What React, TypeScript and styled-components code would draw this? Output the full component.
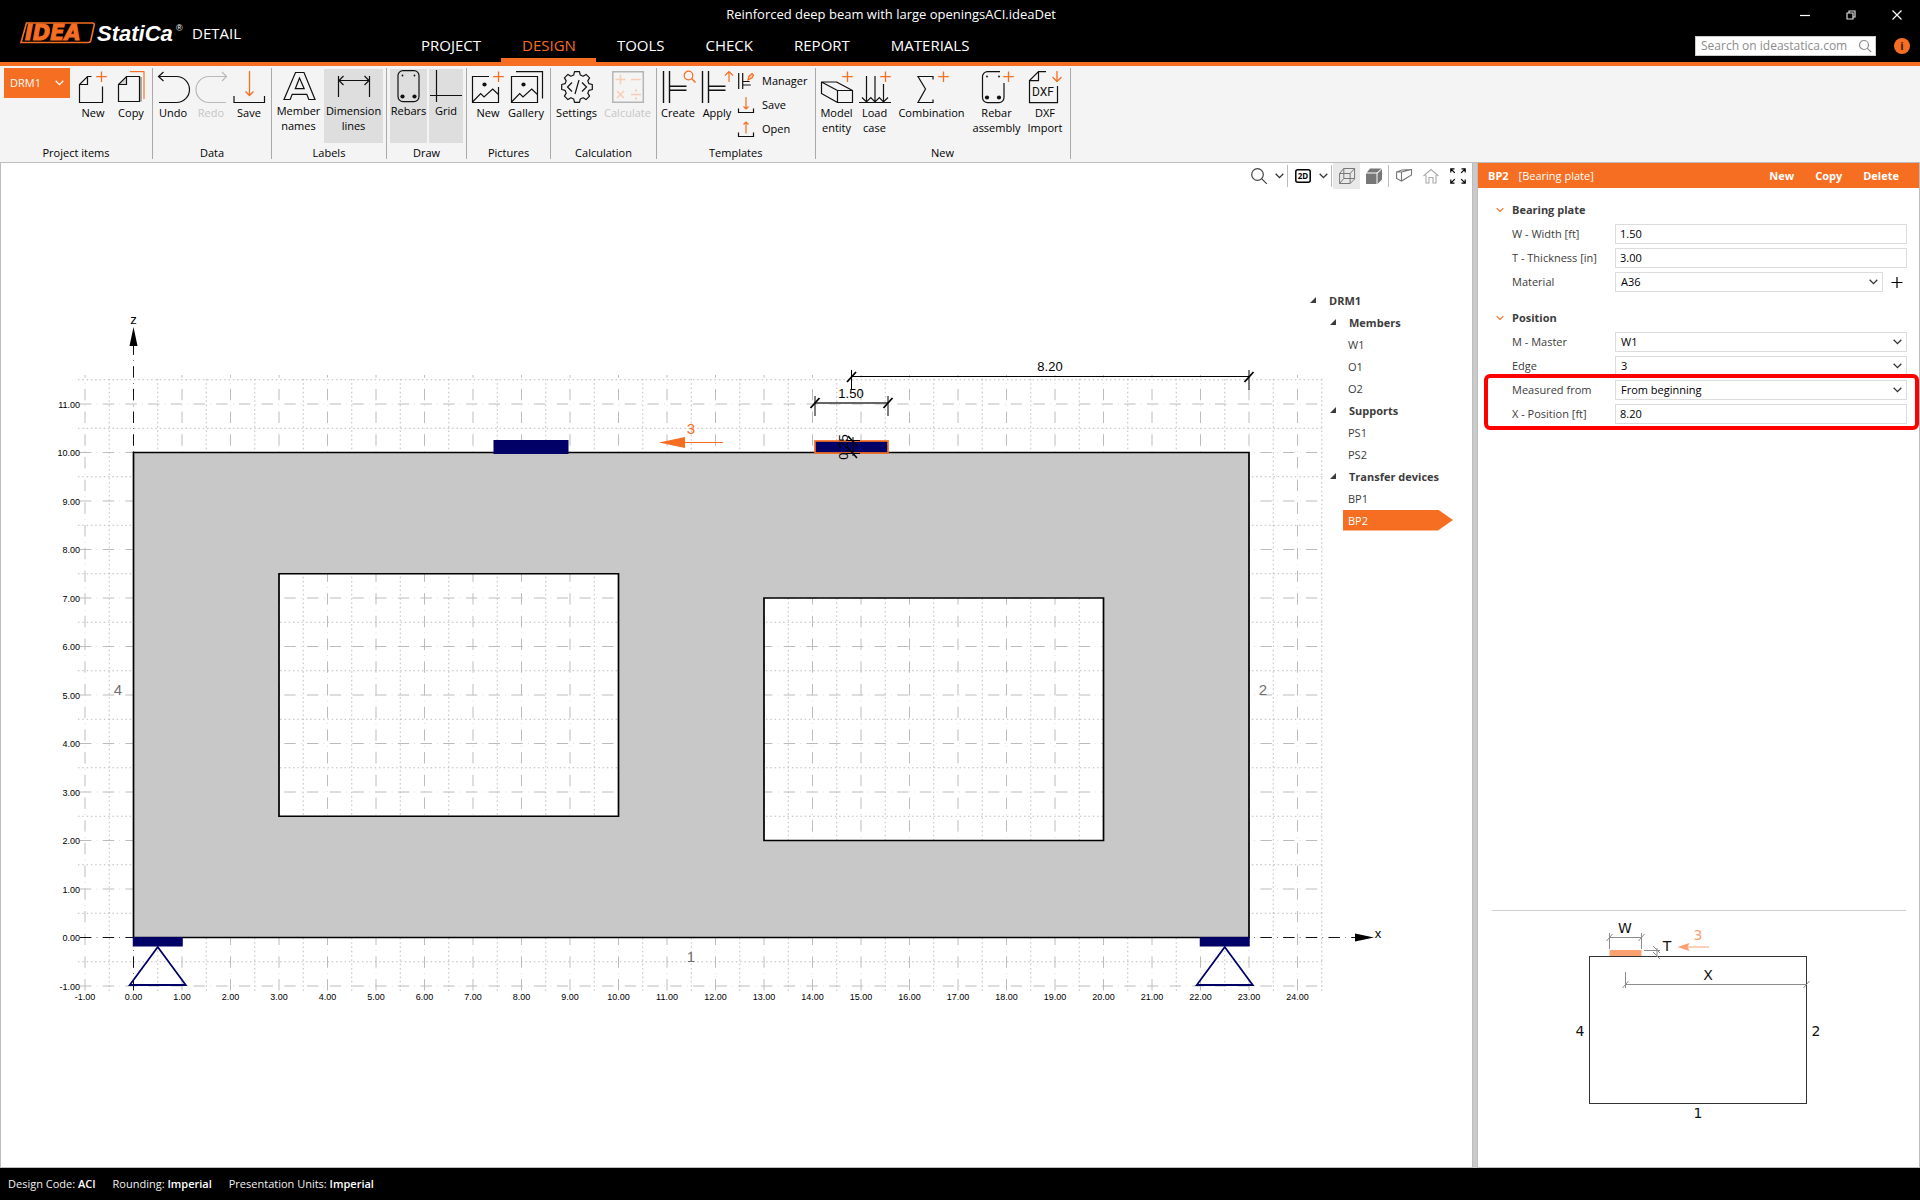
import React from "react";
import styled, { createGlobalStyle, css } from "styled-components";

const ORANGE = "#f56e21";
const NAVY = "#000066";
const LINE = "#bdbdbd";

const GlobalStyle = createGlobalStyle`
  *, *::before, *::after { box-sizing: border-box; }
  body { margin: 0; background: #fff; }
  body, button, input, select {
    font-family: "Open Sans", "Noto Sans", sans-serif;
    font-size: 11px;
    line-height: 16px;
    color: #000;
  }
  button { border: 0; padding: 0; background: none; cursor: pointer; }
  a { color: inherit; text-decoration: none; }
  svg { display: block; flex: none; }
`;

/* ---------- shell ---------- */

const Shell = styled.div`
  display: grid;
  grid-template-rows: 66px 97px minmax(0, 1fr) 32px;
  height: 100vh;
`;

const Header = styled.header`
  display: grid;
  grid-template-columns: 400px minmax(0, 1fr) auto;
  grid-template-rows: 30px 36px;
  background: #000;
  color: #fff;
  box-shadow: inset 0 -4px 0 ${ORANGE};
`;

const Brand = styled.div`
  grid-area: 1 / 1 / 3 / 2;
  display: flex;
  align-items: center;
  gap: 8px;
  padding: 0 0 0 20px;
  font-size: 15px;
  line-height: 20px;
`;

const TitleBar = styled.div`
  grid-area: 1 / 1 / 2 / 4;
  display: flex;
`;

const Title = styled.h1`
  flex: 1;
  margin: 0;
  font-size: 13px;
  font-weight: 400;
  line-height: 28px;
  text-align: center;
`;

const WindowButton = styled.button`
  display: grid;
  place-items: center;
  width: 46px;
`;

const Tabs = styled.nav`
  grid-area: 2 / 2;
  display: flex;
`;

const Tab = styled.a<{ $active?: boolean }>`
  padding: 3px 20px 0 21px;
  border-bottom: 8px solid ${(p) => (p.$active ? ORANGE : "transparent")};
  color: ${(p) => (p.$active ? ORANGE : "#fff")};
  font-size: 15px;
  line-height: 24px;
`;

const HeaderTools = styled.div`
  grid-area: 2 / 3;
  display: flex;
  align-items: flex-start;
  gap: 18px;
  padding: 6px 10px 0 0;
`;

const SearchBox = styled.label`
  display: flex;
  align-items: center;
  width: 181px;
  height: 20px;
  padding: 0 4px 0 5px;
  background: #fff;
  border: 1px solid #ccc;
  input {
    flex: 1;
    min-width: 0;
    border: 0;
    padding: 0;
    outline: 0;
    background: none;
    font-size: 12px;
  }
  input::placeholder { color: #8c8c8c; opacity: 1; }
`;

const InfoButton = styled.button`
  width: 16px;
  height: 16px;
  margin-top: 2px;
  border-radius: 50%;
  background: ${ORANGE};
  color: #3a1a06;
  font-weight: 700;
`;

/* ---------- ribbon ---------- */

const Ribbon = styled.div`
  display: flex;
  padding: 2px 0 3px;
  background: #f4f4f4;
  border-bottom: 1px solid ${LINE};
`;

const RibbonGroup = styled.section`
  display: flex;
  flex-direction: column;
  justify-content: space-between;
  border-right: 1px solid #a9a9a9;
`;

const GroupItems = styled.div<{ $pad?: string }>`
  display: flex;
  align-items: flex-start;
  padding: ${(p) => p.$pad ?? "0 2px 0 1px"};
`;

const GroupName = styled.h2`
  margin: 0;
  font-size: 11px;
  font-weight: 400;
  line-height: 12px;
  text-align: center;
`;

const ItemPicker = styled.button`
  display: flex;
  align-items: center;
  justify-content: space-between;
  width: 66px;
  height: 30px;
  margin-right: 4px;
  padding: 0 6px;
  background: ${ORANGE};
  color: #fff;
`;

const RibbonButton = styled.button<{ $w: number; $toggle?: boolean; $on?: boolean }>`
  display: flex;
  flex-direction: column;
  align-items: center;
  width: ${(p) => p.$w}px;
  padding-top: 3px;
  line-height: 15px;
  text-align: center;
  span { margin-top: 2px; }
  ${(p) =>
    p.$toggle &&
    css`
      height: 74px;
      margin-top: 1px;
      padding-top: 1px;
      span { margin-top: 1px; }
    `}
  ${(p) => p.$on && css`background: #dedede;`}
  &:disabled { color: #c6c6c6; }
`;

const SmallList = styled.div`
  display: flex;
  flex-direction: column;
  gap: 8px;
  padding: 5px 5px 0 2px;
`;

const SmallButton = styled.button`
  display: flex;
  align-items: center;
  gap: 8px;
`;

/* ---------- workspace ---------- */

const Workspace = styled.main`
  display: grid;
  grid-template-columns: minmax(0, 1fr) 6px 442px;
  min-height: 0;
`;

const Viewport = styled.section`
  display: grid;
  min-width: 0;
  min-height: 0;
  border: solid ${LINE};
  border-width: 0 0 1px 1px;
  background: #fff;
`;

const Splitter = styled.div`
  border: solid ${LINE};
  border-width: 0 1px;
  background: #cacaca;
`;

const Scene = styled.svg`
  grid-area: 1 / 1;
  width: 100%;
  height: 100%;
  min-height: 0;
  font-family: "Liberation Sans", Arial, sans-serif;
`;

const ViewTools = styled.div`
  grid-area: 1 / 1;
  justify-self: end;
  align-self: start;
  display: flex;
  align-items: center;
  height: 26px;
  margin-right: 1px;
`;

const ViewButton = styled.button<{ $w?: number; $on?: boolean }>`
  display: grid;
  place-items: center;
  width: ${(p) => p.$w ?? 27}px;
  height: 26px;
  background: ${(p) => (p.$on ? "#e9e9e9" : "none")};
`;

const ViewRule = styled.div`
  width: 1px;
  height: 22px;
  margin: 0 1px;
  background: #bdbdbd;
`;

const Tree = styled.ul`
  grid-area: 1 / 1;
  justify-self: end;
  align-self: start;
  width: 162px;
  margin: 126px 0 0;
  padding: 0;
  list-style: none;
  color: #3c3c3c;
`;

const TreeRow = styled.li<{ $level: number; $active?: boolean }>`
  display: flex;
  align-items: center;
  gap: 13px;
  height: 22px;
  padding-left: ${(p) => [0, 20, 38][p.$level]}px;
  font-weight: ${(p) => (p.$level < 2 ? 700 : 400)};
`;

const TreeLeaf = styled.a<{ $active?: boolean }>`
  display: block;
  height: 21px;
  line-height: 21px;
  ${(p) =>
    p.$active &&
    css`
      width: 110px;
      margin-left: -5px;
      padding-left: 5px;
      background: ${ORANGE};
      color: #fff;
      clip-path: polygon(0 0, 95px 0, 100% 50%, 95px 100%, 0 100%);
    `}
`;

/* ---------- property panel ---------- */

const Panel = styled.aside`
  display: flex;
  flex-direction: column;
  border: solid ${LINE};
  border-width: 0 1px 1px 0;
  background: #fff;
  color: #3c3c3c;
`;

const PanelHeader = styled.header`
  display: flex;
  align-items: center;
  gap: 10px;
  height: 25px;
  padding: 0 20px 0 10px;
  background: ${ORANGE};
  color: #fff;
`;

const PanelActions = styled.div`
  display: flex;
  gap: 21px;
  margin-left: auto;
  button { color: #fff; font-weight: 700; }
`;

const PanelBody = styled.div`
  display: flex;
  flex-direction: column;
  gap: 12px;
  flex: 1;
  padding: 10px 12px 0 18px;
`;

const SectionTitle = styled.h3`
  display: flex;
  align-items: center;
  gap: 8px;
  height: 24px;
  margin: 0;
  font-size: 11px;
  font-weight: 700;
`;

const Field = styled.div`
  display: grid;
  grid-template-columns: 103px minmax(0, 1fr) auto;
  align-items: center;
  height: 24px;
  padding-left: 16px;
`;

const TextInput = styled.input`
  width: 100%;
  height: 20px;
  padding: 0 4px 1px;
  border: 1px solid #dcdcdc;
  outline: 0;
`;

const SelectBox = styled.div`
  display: grid;
  align-items: center;
  select {
    grid-area: 1 / 1;
    width: 100%;
    height: 20px;
    padding: 0 5px 1px;
    border: 1px solid #dcdcdc;
    border-radius: 0;
    appearance: none;
    background: #fff;
    outline: 0;
  }
  svg {
    grid-area: 1 / 1;
    justify-self: end;
    margin-right: 5px;
    pointer-events: none;
  }
`;

const AddButton = styled.button`
  display: grid;
  place-items: center;
  width: 24px;
  height: 20px;
  padding-left: 4px;
`;

const Highlighted = styled.div`
  position: relative;
  &::after {
    content: "";
    position: absolute;
    inset: -4px -12px -4px -12px;
    border: 4px solid #f00;
    border-radius: 6px;
    pointer-events: none;
  }
`;

const Figure = styled.figure`
  height: 257px;
  margin: 0 13px 0 14px;
  border-top: 1px solid #cfcfcf;
  font-family: "DejaVu Sans", Verdana, sans-serif;
`;

const StatusBar = styled.footer`
  display: flex;
  align-items: center;
  gap: 17px;
  padding: 0 8px;
  background: #000;
  color: #f0f0f0;
  b { font-weight: 600; color: #fff; }
`;

/* ---------- icons ---------- */

const Ico = ({ children, color = "#111", size = 32 }: { children: React.ReactNode; color?: string; size?: number }) => (
  <svg width={size} height={size} viewBox={`0 0 ${size} ${size}`} fill="none" stroke={color} strokeWidth="1.2" overflow="visible" aria-hidden="true">
    {children}
  </svg>
);

const Plus = ({ x = 26.5 }: { x?: number }) => <path stroke={ORANGE} strokeWidth="1.3" d={`M${x} .5V11M${x - 5.3} 5.7h10.6`} />;

const Chevron = ({ color = "#333", size = 9 }: { color?: string; size?: number }) => (
  <svg width={size} height="6" viewBox="0 0 9 6" fill="none" stroke={color} strokeWidth="1.3" aria-hidden="true">
    <path d="M.7 .8 4.5 4.6 8.3 .8" />
  </svg>
);

const NewFile = () => (
  <Ico>
    <path d="M14.5 5.5h-4L2.5 13.5v18h23v-16M10.5 5.5v8h-8" />
    <Plus x={24.5} />
  </Ico>
);
const CopyFile = () => (
  <Ico>
    <path stroke="#f9a77a" strokeWidth="2" d="M29 1v27" />
    <path stroke={ORANGE} d="M15 .6h14.5" />
    <path stroke="#aaa" strokeWidth="2" d="M26 6v24.5" />
    <path fill="#d8d8d8" stroke="none" d="M11.5 5.5v8h-8z" />
    <path d="M11.5 5.5h13v25h-21v-17zv8h-8" />
  </Ico>
);
const UndoIcon = () => (
  <Ico>
    <path d="M1.5 5.5H19.5a13 13 0 0 1 0 26H2M6.5 1 1.5 5.5 6.5 10" />
  </Ico>
);
const RedoIcon = () => (
  <Ico color="#b9b9b9">
    <path d="M31.5 5.5H14a13 13 0 0 0 0 26H31M27 1 31.5 5.5 27 10" />
  </Ico>
);
const SaveIcon = () => (
  <Ico>
    <path d="M1 25v6.5h30.5V25" />
    <path stroke={ORANGE} strokeWidth="1.3" d="M16.5 0v24.5M12.5 20.5l4 4 4-4" />
  </Ico>
);
const LetterIcon = () => (
  <Ico>
    <path d="M12.5 2.5h8.500L32 29.500h-6.200l-2-5.200H9.200l-2 5.200H1zM16.500 8l-4.200 10.700h8.900z" />
  </Ico>
);
const DimensionIcon = () => (
  <Ico>
    <path d="M.5 6v21M31.5 6v21M1 10.500h30M5.500 6 1 10.500 5.500 15M26.500 6l4.500 4.500-4.500 4.500" />
  </Ico>
);
const RebarDots = ({ x = 0 }: { x?: number }) => (
  <g fill="#111" stroke="none">
    <circle cx={9.5 + x} cy="5.5" r=".9" />
    <circle cx={21.5 + x} cy="5.5" r=".9" />
    <circle cx={9.5 + x} cy="26.5" r="2.1" />
    <circle cx={21.5 + x} cy="26.5" r="2.1" />
  </g>
);
const RebarIcon = () => (
  <Ico>
    <rect x="5" y=".6" width="21" height="31" rx="5" />
    <RebarDots />
  </Ico>
);
const GridIcon = () => (
  <Ico>
    <path d="M6.5 0v32M0 25.5h32" />
  </Ico>
);
const PictureBody = () => (
  <>
    <circle cx="12.5" cy="13.5" r="2.1" fill="#111" stroke="none" />
    <path d="M.5 31l8.2-8.3 3.3 3.3 8.7-8 6 5.700" />
  </>
);
const NewPicture = () => (
  <Ico>
    <path d="M17 5.5H.5v26h26V16" />
    <PictureBody />
    <Plus />
  </Ico>
);
const GalleryIcon = () => (
  <Ico>
    <g transform="translate(1 0)">
      <path d="M.5 5.5h26v26H.5zM5 .6h26.5v27" />
      <PictureBody />
    </g>
  </Ico>
);

const gearPath = (() => {
  const pts: string[] = [];
  for (let i = 0; i < 8; i++) {
    const a = (i * Math.PI) / 4;
    const steps: [number, number][] = [
      [-0.27, 12.4],
      [-0.16, 15.5],
      [0.16, 15.5],
      [0.27, 12.4],
    ];
    steps.forEach(([d, r]) => pts.push(`${(16 + r * Math.sin(a + d)).toFixed(2)} ${(16 - r * Math.cos(a + d)).toFixed(2)}`));
  }
  return `M${pts.join("L")}Z`;
})();

const GearIcon = () => (
  <Ico>
    <path strokeLinejoin="round" d={gearPath} />
    <path d="M11 11.5 6.5 16l4.5 4.5M21 11.5l4.5 4.5-4.5 4.5M18 9l-4 14" />
  </Ico>
);
const CalculateIcon = () => (
  <Ico color="#b5b5b5">
    <path strokeWidth="1.5" d="M.8.8h30.5v30.5H.8z" />
    <path stroke="#f8cdb3" strokeWidth="1.5" d="M8.5 3.5v10M3.5 8.5h10M19 8.5h10M5 20l7 7M12 20l-7 7M19 23.5h10" />
    <path fill="#f8cdb3" stroke="none" d="M23 18.5h2v2h-2zM23 26.5h2v2h-2z" />
  </Ico>
);
const TemplateLines = () => <path strokeWidth="1.4" d="M1.5 0v32M7.5 0v32M7.5 15.3h17M7.5 19.3h17" />;
const CreateIcon = () => (
  <Ico>
    <TemplateLines />
    <g stroke={ORANGE}>
      <circle cx="26.5" cy="4.5" r="4.3" />
      <path d="M29.5 7.5l4 4" />
    </g>
  </Ico>
);
const ApplyIcon = () => (
  <Ico>
    <TemplateLines />
    <path stroke={ORANGE} d="M28 .5V11M24 4.5l4-4 4 4" />
  </Ico>
);
const ManagerIcon = () => (
  <Ico size={16}>
    <path d="M.7 0v16M4.7 0v16M4.7 8.5h7M4.7 12h8" />
    <path stroke={ORANGE} fill="#fbc9a8" d="M10 7l1-4 3-2.5 1.5 1.5L14 5z" />
  </Ico>
);
const SmallSave = () => (
  <Ico size={16}>
    <path d="M.5 11.5v4h15v-4" />
    <path stroke={ORANGE} d="M8 0v12M5.5 9.5 8 12l2.5-2.5" />
  </Ico>
);
const SmallOpen = () => (
  <Ico size={16}>
    <path d="M.5 11.5v4h15v-4" />
    <path stroke={ORANGE} d="M8 1v11.5M5.5 3.5 8 1l2.5 2.5" />
  </Ico>
);
const ModelIcon = () => (
  <Ico>
    <path strokeLinejoin="round" d="M.5 11h15l16 8.5v12h-15L.5 22.5zl16 8.5h15M16.5 19.5v12" />
    <Plus />
  </Ico>
);
const LoadIcon = () => (
  <Ico>
    <path d="M0 31.5h32M7.5 5v26M16 5v26M24.5 13v18M3 26.5l4.5 4.5 4.3-4.5L16 31l4.3-4.5 4.2 4.5 4.5-4.5" />
    <Plus />
  </Ico>
);
const SigmaIcon = () => (
  <Ico>
    <path d="M17 8.5v-3H2L9.5 18 2 31.5h15v-3" />
    <Plus x={27.5} />
  </Ico>
);
const AssemblyIcon = () => (
  <Ico>
    <path d="M19 .6H6.5a5 5 0 0 0-5 5v21a5 5 0 0 0 5 5h11.5a5 5 0 0 0 5-5V12" />
    <RebarDots x={-3.5} />
    <Plus x={27.5} />
  </Ico>
);
const DxfIcon = () => (
  <Ico>
    <path d="M17 .6H9.5l-9 9v22h28V15M9.5.6v9h-9" />
    <path stroke={ORANGE} strokeWidth="1.3" d="M28 0v10.5M23.5 6l4.5 4.5L32.5 6" />
    <text x="14" y="25" textAnchor="middle" fontFamily="'Liberation Sans Narrow', Roboto, sans-serif" fontSize="12" fill="#111" stroke="none">
      DXF
    </text>
  </Ico>
);

const Logo = () => (
  <svg width="164" height="30" viewBox="0 -4 164 30" overflow="visible" role="img" aria-label="IDEA StatiCa">
    <path d="M6.500 1h66q2 0 1.700 2l-3.400 15.500q-.5 2-2.500 2H1z" fill="#000" stroke={ORANGE} strokeWidth="1.600" />
    <text x="5" y="18" fontFamily="'DejaVu Sans', sans-serif" fontWeight="700" fontStyle="italic" fontSize="21" fill={ORANGE} stroke={ORANGE} strokeWidth="1">
      IDEA
    </text>
    <text x="77" y="19" fontFamily="'Liberation Sans', sans-serif" fontWeight="700" fontStyle="italic" fontSize="22" fill="#fff">
      StatiCa
    </text>
    <text x="156" y="9" fontFamily="'Liberation Sans', sans-serif" fontSize="9" fill="#fff">
      ®
    </text>
  </svg>
);

/* ---------- model drawing ---------- */

const UNIT = 48.5;
const sx = (v: number) => 133.5 + v * UNIT;
const sy = (v: number) => 937.5 - v * UNIT;
const range = (from: number, to: number) => Array.from({ length: to - from + 1 }, (_, i) => from + i);

const Tick = ({ x, y }: { x: number; y: number }) => <path strokeWidth="1.8" d={`M${x - 4.5} ${y + 5}l9-10`} />;

const ModelScene = () => (
  <Scene viewBox="1 163 1471 1004" preserveAspectRatio="xMinYMin meet" role="img" aria-label="Deep beam with two openings">
    <g stroke="#bcbcbc" fill="none">
      <g strokeDasharray="1.5 2.8">
        {range(-1, 24).map((n) => (
          <path key={`mv${n}`} d={`M${sx(n + 0.5)} 991V378`} />
        ))}
        {range(-1, 11).map((n) => (
          <path key={`mh${n}`} d={`M78 ${sy(n + 0.5)}H1325`} />
        ))}
      </g>
      <g strokeDasharray="11.4 5.4 .5 5.4">
        {range(-1, 24).map((n) => (
          <path key={`v${n}`} d={`M${sx(n)} 990.5V375`} />
        ))}
        {range(-1, 11).map((n) => (
          <path key={`h${n}`} d={`M80 ${sy(n)}H1325`} />
        ))}
      </g>
    </g>

    <g stroke="#111" strokeDasharray="11.4 5.4 .5 5.4">
      <path d={`M${sx(0)} 990.5V345`} />
      <path d={`M80 ${sy(0)}H1356`} />
    </g>
    <path d={`M${sx(0)} 327l4 19h-8zM1374 ${sy(0)}l-19-4v8z`} />

    <g fontSize="9" fill="#000">
      {range(-1, 24).map((n) => (
        <text key={n} x={sx(n)} y="1000" textAnchor="middle">
          {n.toFixed(2)}
        </text>
      ))}
      {range(-1, 11).map((n) => (
        <text key={n} x="80" y={sy(n) + 3.5} textAnchor="end">
          {n.toFixed(2)}
        </text>
      ))}
    </g>
    <g fontSize="13" textAnchor="middle">
      <text x="133.5" y="324">z</text>
      <text x="1378" y="938">x</text>
    </g>

    <path
      fillRule="evenodd"
      fill="#c8c8c8"
      stroke="#000"
      strokeWidth="1.7"
      d={[
        `M${sx(0)} ${sy(0)}H${sx(23)}V${sy(10)}H${sx(0)}Z`,
        `M${sx(3)} ${sy(2.5)}H${sx(10)}V${sy(7.5)}H${sx(3)}Z`,
        `M${sx(13)} ${sy(2)}H${sx(20)}V${sy(7)}H${sx(13)}Z`,
      ].join("")}
    />

    {[0.5, 22.5].map((c) => (
      <g key={c} stroke={NAVY} strokeWidth="1.8" fill="none">
        <path fill={NAVY} stroke="none" d={`M${sx(c) - 25} 937h50v9.5h-50z`} />
        <path d={`M${sx(c)} 947l28 38h-56z`} />
      </g>
    ))}

    <rect x="493.5" y="440" width="75" height="14" fill={NAVY} />
    <rect x="815" y="441" width="73" height="12" fill={NAVY} stroke={ORANGE} strokeWidth="1.7" />

    <g stroke="#000" fill="none">
      <path d="M851.5 376.5H1249M851.5 370v20M1249 370v20" />
      <path stroke="#666" strokeWidth="2" d="M815 403h73" />
      <path d="M815 396v20M888 396v20" />
      <Tick x={851.5} y={377} />
      <Tick x={1249} y={377} />
      <Tick x={815} y={403} />
      <Tick x={888} y={403} />
      <path d="M846 440.5h14M846 453.500h14M853 437v19" />
      <path strokeWidth="1.6" d="M848 436l9 10M848 448l9 10" />
    </g>
    <g fontSize="13" textAnchor="middle">
      <text x="1050" y="371">8.20</text>
      <text x="851" y="398">1.50</text>
      <text x="848" y="447" transform="rotate(-90 848 447)">0.25</text>
    </g>

    <path fill={ORANGE} d="M659 442.5l26-5.5v11z" />
    <path stroke={ORANGE} d="M684 442.5h39" />
    <g fontSize="15" fill="#707070" textAnchor="middle">
      <text x="691" y="434" fill={ORANGE}>3</text>
      <text x="691" y="962">1</text>
      <text x="1263" y="695">2</text>
      <text x="118" y="695">4</text>
    </g>
  </Scene>
);

const PlateDiagram = () => (
  <svg width="100%" height="254" viewBox="0 1 414 254" role="img" aria-label="Bearing plate parameters">
    <rect x="97.5" y="46.5" width="217" height="147" fill="none" stroke="#333" />
    <rect x="117.5" y="40" width="32" height="6" fill="#fba071" />
    <g stroke="#8c8c8c" fill="none">
      <path d="M117.5 23v16M149.5 23v16M117 27.5h33M114.5 31l6-7M146.5 31l6-7" />
      <path d="M152 40.5h16M161 36l7 7M161 42l7 7M165 38v9" />
      <path d="M133.5 62v16M133 74.5h181M130.5 78l6-7M311.5 78l6-7" />
    </g>
    <path fill="#fba071" d="M185.5 37l12-4-2 4 2 4z" />
    <path stroke="#fba071" d="M195 37h22" />
    <g fontSize="14" fill="#111" textAnchor="middle">
      <text x="133" y="23">W</text>
      <text x="175" y="41">T</text>
      <text x="206" y="30" fill="#fba071">3</text>
      <text x="216" y="70">X</text>
      <text x="88" y="126">4</text>
      <text x="324" y="126">2</text>
      <text x="206" y="208">1</text>
    </g>
  </svg>
);

/* ---------- composed parts ---------- */

type ButtonSpec = { label: React.ReactNode; icon: React.ReactNode; w: number; toggle?: boolean; on?: boolean; disabled?: boolean };

const RibbonItem = ({ label, icon, w, toggle, on, disabled }: ButtonSpec) => (
  <RibbonButton type="button" $w={w} $toggle={toggle} $on={on} disabled={disabled} aria-pressed={toggle ? !!on : undefined}>
    {icon}
    <span>{label}</span>
  </RibbonButton>
);

const twoLines = (a: string, b: string) => (
  <>
    {a}
    <br />
    {b}
  </>
);

const Group = ({ name, pad, children }: { name: string; pad?: string; children: React.ReactNode }) => (
  <RibbonGroup>
    <GroupItems $pad={pad}>{children}</GroupItems>
    <GroupName>{name}</GroupName>
  </RibbonGroup>
);

const SelectField = ({ id, label, value, extra }: { id: string; label: string; value: string; extra?: React.ReactNode }) => (
  <Field>
    <label htmlFor={id}>{label}</label>
    <SelectBox>
      <select id={id} defaultValue={value}>
        <option>{value}</option>
      </select>
      <Chevron />
    </SelectBox>
    {extra}
  </Field>
);

const InputField = ({ id, label, value }: { id: string; label: string; value: string }) => (
  <Field>
    <label htmlFor={id}>{label}</label>
    <TextInput id={id} defaultValue={value} />
  </Field>
);

const treeRows: { text: string; level: number; active?: boolean }[] = [
  { text: "DRM1", level: 0 },
  { text: "Members", level: 1 },
  { text: "W1", level: 2 },
  { text: "O1", level: 2 },
  { text: "O2", level: 2 },
  { text: "Supports", level: 1 },
  { text: "PS1", level: 2 },
  { text: "PS2", level: 2 },
  { text: "Transfer devices", level: 1 },
  { text: "BP1", level: 2 },
  { text: "BP2", level: 2, active: true },
];

const AppHeader = () => (
  <Header>
    <TitleBar>
      <Title>Reinforced deep beam with large openingsACI.ideaDet</Title>
      <WindowButton type="button" aria-label="Minimize">
        <Ico size={10} color="#fff"><path d="M0 5.5h10" /></Ico>
      </WindowButton>
      <WindowButton type="button" aria-label="Restore">
        <Ico size={10} color="#ddd"><path d="M1 3h6v6H1zM3 3V1h6v6H7" /></Ico>
      </WindowButton>
      <WindowButton type="button" aria-label="Close">
        <Ico size={10} color="#fff"><path d="M.5.5l9 9M9.5.5l-9 9" /></Ico>
      </WindowButton>
    </TitleBar>
    <Brand>
      <Logo />
      <span>DETAIL</span>
    </Brand>
    <Tabs>
      {["PROJECT", "DESIGN", "TOOLS", "CHECK", "REPORT", "MATERIALS"].map((t) => (
        <Tab key={t} href="#" $active={t === "DESIGN"}>{t}</Tab>
      ))}
    </Tabs>
    <HeaderTools>
      <SearchBox>
        <input type="text" placeholder="Search on ideastatica.com" aria-label="Search on ideastatica.com" />
        <Ico size={12} color="#8c8c8c"><circle cx="5" cy="5" r="4.5" /><path d="M8.2 8.2l4 4" /></Ico>
      </SearchBox>
      <InfoButton type="button">i</InfoButton>
    </HeaderTools>
  </Header>
);

const AppRibbon = () => (
  <Ribbon>
    <Group name="Project items" pad="0 2px 0 4px">
      <ItemPicker type="button">
        DRM1
        <Chevron color="#fff" />
      </ItemPicker>
      <RibbonItem w={38} label="New" icon={<NewFile />} />
      <RibbonItem w={38} label="Copy" icon={<CopyFile />} />
    </Group>
    <Group name="Data" pad="0 3px 0 1px">
      <RibbonItem w={38} label="Undo" icon={<UndoIcon />} />
      <RibbonItem w={38} label="Redo" icon={<RedoIcon />} disabled />
      <RibbonItem w={38} label="Save" icon={<SaveIcon />} />
    </Group>
    <Group name="Labels" pad="0 3px 0 1px">
      <RibbonItem w={51} toggle label={twoLines("Member", "names")} icon={<LetterIcon />} />
      <RibbonItem w={59} toggle on label={twoLines("Dimension", "lines")} icon={<DimensionIcon />} />
    </Group>
    <Group name="Draw" pad="0 3px">
      <RibbonItem w={37} toggle on label="Rebars" icon={<RebarIcon />} />
      <GroupItems $pad="0 0 0 2px">
        <RibbonItem w={34} toggle on label="Grid" icon={<GridIcon />} />
      </GroupItems>
    </Group>
    <Group name="Pictures" pad="0 5px 0 2px">
      <RibbonItem w={38} label="New" icon={<NewPicture />} />
      <RibbonItem w={38} label="Gallery" icon={<GalleryIcon />} />
    </Group>
    <Group name="Calculation">
      <RibbonItem w={49} label="Settings" icon={<GearIcon />} />
      <RibbonItem w={53} label="Calculate" icon={<CalculateIcon />} disabled />
    </Group>
    <Group name="Templates">
      <RibbonItem w={40} label="Create" icon={<CreateIcon />} />
      <RibbonItem w={38} label="Apply" icon={<ApplyIcon />} />
      <SmallList>
        <SmallButton type="button"><ManagerIcon />Manager</SmallButton>
        <SmallButton type="button"><SmallSave />Save</SmallButton>
        <SmallButton type="button"><SmallOpen />Open</SmallButton>
      </SmallList>
    </Group>
    <Group name="New">
      <RibbonItem w={40} label={twoLines("Model", "entity")} icon={<ModelIcon />} />
      <RibbonItem w={36} label={twoLines("Load", "case")} icon={<LoadIcon />} />
      <RibbonItem w={78} label="Combination" icon={<SigmaIcon />} />
      <RibbonItem w={52} label={twoLines("Rebar", "assembly")} icon={<AssemblyIcon />} />
      <RibbonItem w={45} label={twoLines("DXF", "Import")} icon={<DxfIcon />} />
    </Group>
  </Ribbon>
);

const AppViewTools = () => (
  <ViewTools>
    <ViewButton type="button" aria-label="Zoom">
      <Ico size={16} color="#444"><circle cx="6.5" cy="6.5" r="5.8" /><path d="M10.8 10.8l5 5" /></Ico>
    </ViewButton>
    <ViewButton type="button" $w={14} aria-label="Zoom options"><Chevron /></ViewButton>
    <ViewRule />
    <ViewButton type="button" aria-label="2D view">
      <svg width="16" height="14" viewBox="0 0 16 14" aria-hidden="true">
        <rect x=".8" y=".8" width="14.4" height="12.4" rx="2" fill="#fff" stroke="#000" strokeWidth="1.5" />
        <text x="8" y="10" textAnchor="middle" fontFamily="'Open Sans', sans-serif" fontWeight="700" fontSize="8">2D</text>
      </svg>
    </ViewButton>
    <ViewButton type="button" $w={14} aria-label="View options"><Chevron /></ViewButton>
    <ViewRule />
    <ViewButton type="button" $on aria-label="Wireframe">
      <Ico size={16} color="#777"><path d="M.6 5.5h10.5v10H.6zM.6 5.5l4-5h11v10.5l-4.500 4.500M11.100 5.500l4.500-5M4.800.500v10h10.800M4.800 10.500.600 15.500" strokeWidth="1" /></Ico>
    </ViewButton>
    <ViewButton type="button" aria-label="Solid">
      <Ico size={16} color="none"><path fill="#777" d="M0 5.500h10.500V16H0zM.8 4.500 4 .500h11.500l-4.500 4zM11.500 5.500 16 1v10.500L11.500 16z" /></Ico>
    </ViewButton>
    <ViewRule />
    <ViewButton type="button" aria-label="Section">
      <Ico size={16} color="#777"><path d="M.6 4 6 2l9.500-.5V7L5.500 13 .6 10.500zM.6 4h5L15.500 1.500M5.500 4V13" strokeWidth="1.1" /></Ico>
    </ViewButton>
    <ViewButton type="button" aria-label="Home">
      <Ico size={16} color="#aaa"><path d="M.5 8 8 1.5 15.500 8M3 7v8h3V9.500h4V15h3V7" strokeWidth="1.1" /></Ico>
    </ViewButton>
    <ViewButton type="button" aria-label="Full screen">
      <Ico size={16} color="#000"><path strokeWidth="1.2" d="M.8 4.500V.8h3.700M.8.8l4 4M11.500.8h3.700v3.700M15.200.8l-4 4M15.200 11.500v3.700h-3.700M15.200 15.200l-4-4M4.500 15.200H.8v-3.700M.8 15.200l4-4" /></Ico>
    </ViewButton>
  </ViewTools>
);

const ModelTree = () => (
  <Tree>
    {treeRows.map((r) => (
      <TreeRow key={r.text} $level={r.level}>
        {r.level < 2 && (
          <svg width="6" height="6" viewBox="0 0 6 6" aria-hidden="true"><path d="M6 0v6H0z" fill="#3c3c3c" /></svg>
        )}
        <TreeLeaf href="#" $active={r.active}>{r.text}</TreeLeaf>
      </TreeRow>
    ))}
  </Tree>
);

export default function App() {
  return (
    <Shell>
      <GlobalStyle />
      <AppHeader />
      <AppRibbon />
      <Workspace>
        <Viewport>
          <ModelScene />
          <AppViewTools />
          <ModelTree />
        </Viewport>
        <Splitter />
        <Panel>
          <PanelHeader>
            <b>BP2</b>
            <span>[Bearing plate]</span>
            <PanelActions>
              <button type="button">New</button>
              <button type="button">Copy</button>
              <button type="button">Delete</button>
            </PanelActions>
          </PanelHeader>
          <PanelBody>
            <section>
              <SectionTitle><Chevron color={ORANGE} size={8} />Bearing plate</SectionTitle>
              <InputField id="width" label="W - Width [ft]" value="1.50" />
              <InputField id="thickness" label="T - Thickness [in]" value="3.00" />
              <SelectField
                id="material"
                label="Material"
                value="A36"
                extra={
                  <AddButton type="button" aria-label="Add material">
                    <Ico size={12} color="#000"><path d="M6 1v11M.5 6.5h11" /></Ico>
                  </AddButton>
                }
              />
            </section>
            <section>
              <SectionTitle><Chevron color={ORANGE} size={8} />Position</SectionTitle>
              <SelectField id="master" label="M - Master" value="W1" />
              <SelectField id="edge" label="Edge" value="3" />
              <Highlighted>
                <SelectField id="measured" label="Measured from" value="From beginning" />
                <InputField id="xpos" label="X - Position [ft]" value="8.20" />
              </Highlighted>
            </section>
          </PanelBody>
          <Figure>
            <PlateDiagram />
          </Figure>
        </Panel>
      </Workspace>
      <StatusBar>
        <span>Design Code: <b>ACI</b></span>
        <span>Rounding: <b>Imperial</b></span>
        <span>Presentation Units: <b>Imperial</b></span>
      </StatusBar>
    </Shell>
  );
}
